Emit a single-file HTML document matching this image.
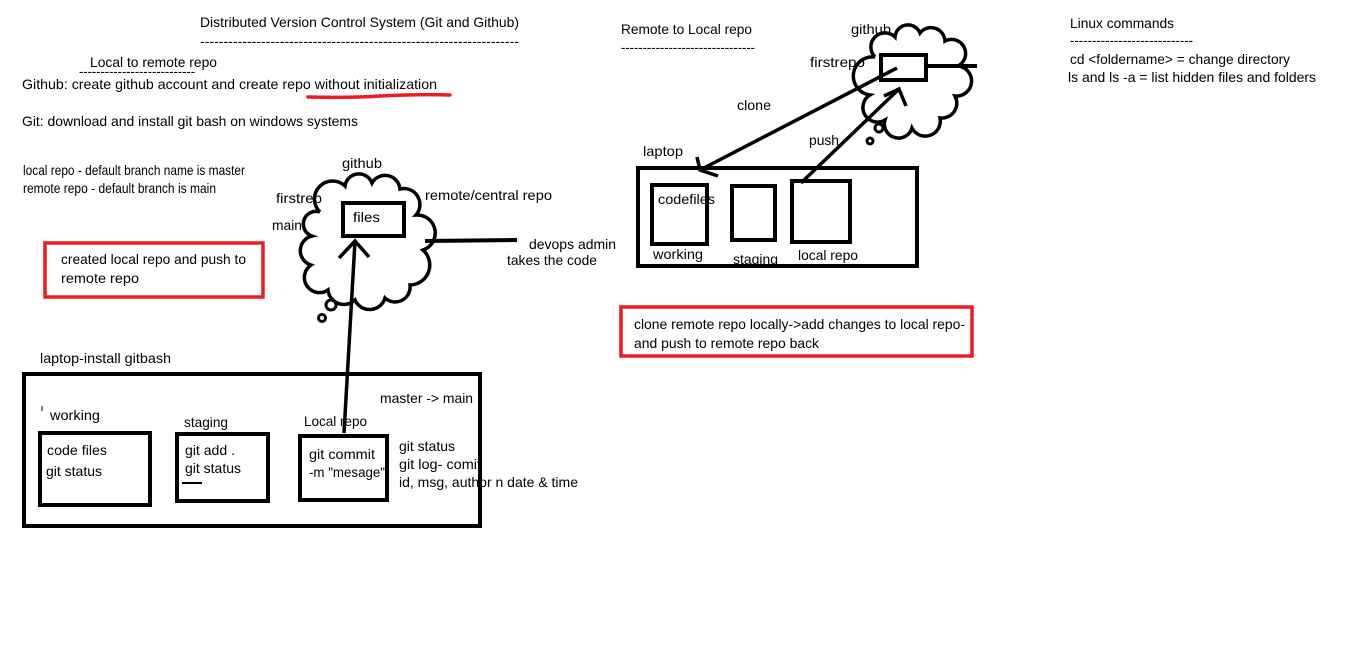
<!DOCTYPE html>
<html><head><meta charset="utf-8"><style>
html,body{margin:0;padding:0;background:#fff;width:1359px;height:665px;overflow:hidden}
svg{display:block}
text{font-family:"Liberation Sans",sans-serif;font-size:14px;fill:#000}
</style></head><body>
<svg width="1359" height="665" viewBox="0 0 1359 665" xmlns="http://www.w3.org/2000/svg">
<g fill="none" stroke="#000" stroke-width="4">
<!-- cloud 1 -->
<path d="M320 212 A18 18 0 0 1 345 186 A14 14 0 0 1 372 183 A15 15 0 0 1 400 189 A16 16 0 0 1 416 215 A18 18 0 0 1 423 250 A20 20 0 0 1 410 285 A15 15 0 0 1 385 298 A16 16 0 0 1 355 300 A16 16 0 0 1 328 290 A15 15 0 0 1 311 265 A15 15 0 0 1 312 236 A12 12 0 0 1 320 212" fill="#fff" stroke-width="3.5"/>
<rect x="343" y="203" width="61" height="33" fill="#fff"/>
<!-- cloud 2 -->
<path d="M875 57 A14 14 0 0 1 895 37 A13 13 0 0 1 920 33 A14 14 0 0 1 945 41 A14 14 0 0 1 958 66 A15 15 0 0 1 955 96 A15 15 0 0 1 940 118 A15 15 0 0 1 912 128 A14 14 0 0 1 885 120 A14 14 0 0 1 870 95 A18 18 0 0 1 875 57" fill="#fff" stroke-width="3.5"/>
<rect x="881" y="55" width="45" height="25" fill="#fff"/>
</g>
<g>
<text x="200" y="27" textLength="319" lengthAdjust="spacingAndGlyphs">Distributed Version Control System (Git and Github)</text>
<text x="200" y="46" textLength="319" lengthAdjust="spacingAndGlyphs">--------------------------------------------------------------------</text>
<text x="90" y="67" textLength="127" lengthAdjust="spacingAndGlyphs">Local to remote repo</text>
<text x="79" y="76" textLength="116" lengthAdjust="spacingAndGlyphs">---------------------------</text>
<text x="22" y="89" textLength="415" lengthAdjust="spacingAndGlyphs">Github: create github account and create repo without initialization</text>
<text x="22" y="126" textLength="336" lengthAdjust="spacingAndGlyphs">Git: download and install git bash on windows systems</text>
<text x="23" y="175" textLength="222" lengthAdjust="spacingAndGlyphs">local repo - default branch name is master</text>
<text x="23" y="193" textLength="193" lengthAdjust="spacingAndGlyphs">remote repo - default branch is main</text>
<text x="342" y="168" textLength="40" lengthAdjust="spacingAndGlyphs">github</text>
<text x="276" y="203" textLength="46" lengthAdjust="spacingAndGlyphs">firstrep</text>
<text x="272" y="230" textLength="30" lengthAdjust="spacingAndGlyphs">main</text>
<text x="353" y="222" textLength="27" lengthAdjust="spacingAndGlyphs">files</text>
<text x="425" y="200" textLength="127" lengthAdjust="spacingAndGlyphs">remote/central repo</text>
<text x="529" y="249" textLength="87" lengthAdjust="spacingAndGlyphs">devops admin</text>
<text x="507" y="265" textLength="90" lengthAdjust="spacingAndGlyphs">takes the code</text>
<text x="61" y="264" textLength="185" lengthAdjust="spacingAndGlyphs">created local repo and push to</text>
<text x="61" y="283" textLength="78" lengthAdjust="spacingAndGlyphs">remote repo</text>
<text x="40" y="363" textLength="131" lengthAdjust="spacingAndGlyphs">laptop-install gitbash</text>
<text x="380" y="403" textLength="93" lengthAdjust="spacingAndGlyphs">master -&gt; main</text>
<text x="50" y="420" textLength="50" lengthAdjust="spacingAndGlyphs">working</text>
<text x="184" y="427" textLength="44" lengthAdjust="spacingAndGlyphs">staging</text>
<text x="304" y="426" textLength="63" lengthAdjust="spacingAndGlyphs">Local repo</text>
<text x="47" y="455" textLength="60" lengthAdjust="spacingAndGlyphs">code files</text>
<text x="46" y="476" textLength="56" lengthAdjust="spacingAndGlyphs">git status</text>
<text x="185" y="455" textLength="50" lengthAdjust="spacingAndGlyphs">git add .</text>
<text x="185" y="473" textLength="56" lengthAdjust="spacingAndGlyphs">git status</text>
<text x="309" y="459" textLength="66" lengthAdjust="spacingAndGlyphs">git commit</text>
<text x="309" y="477" textLength="76" lengthAdjust="spacingAndGlyphs">-m "mesage"</text>
<text x="399" y="451" textLength="56" lengthAdjust="spacingAndGlyphs">git status</text>
<text x="399" y="469" textLength="82" lengthAdjust="spacingAndGlyphs">git log- comit</text>
<text x="399" y="487" textLength="179" lengthAdjust="spacingAndGlyphs">id, msg, author n date &amp; time</text>
<text x="621" y="34" textLength="131" lengthAdjust="spacingAndGlyphs">Remote to Local repo</text>
<text x="621" y="52" textLength="134" lengthAdjust="spacingAndGlyphs">-------------------------------</text>
<text x="851" y="34" textLength="40" lengthAdjust="spacingAndGlyphs">github</text>
<text x="810" y="67" textLength="55" lengthAdjust="spacingAndGlyphs">firstrepo</text>
<text x="737" y="110" textLength="34" lengthAdjust="spacingAndGlyphs">clone</text>
<text x="809" y="145" textLength="30" lengthAdjust="spacingAndGlyphs">push</text>
<text x="643" y="156" textLength="40" lengthAdjust="spacingAndGlyphs">laptop</text>
<text x="658" y="204" textLength="57" lengthAdjust="spacingAndGlyphs">codefiles</text>
<text x="653" y="259" textLength="50" lengthAdjust="spacingAndGlyphs">working</text>
<text x="733" y="264" textLength="45" lengthAdjust="spacingAndGlyphs">staging</text>
<text x="798" y="260" textLength="60" lengthAdjust="spacingAndGlyphs">local repo</text>
<text x="634" y="329" textLength="331" lengthAdjust="spacingAndGlyphs">clone remote repo locally-&gt;add changes to local repo-</text>
<text x="634" y="348" textLength="185" lengthAdjust="spacingAndGlyphs">and push to remote repo back</text>
<text x="1070" y="28" textLength="104" lengthAdjust="spacingAndGlyphs">Linux commands</text>
<text x="1070" y="45" textLength="123" lengthAdjust="spacingAndGlyphs">----------------------------</text>
<text x="1070" y="64" textLength="220" lengthAdjust="spacingAndGlyphs">cd &lt;foldername&gt; = change directory</text>
<text x="1068" y="82" textLength="248" lengthAdjust="spacingAndGlyphs">ls and ls -a = list hidden files and folders</text>
</g>
<g fill="none" stroke="#000" stroke-width="4">
<circle cx="331" cy="305" r="5" stroke-width="3"/>
<circle cx="322" cy="318" r="3.5" stroke-width="3"/>
<line x1="425" y1="241" x2="517" y2="240"/>
<path d="M344 433 L355 241 M339 258 L355 241 L369 257" stroke-width="3.5"/>
<rect x="24" y="374" width="456" height="152"/>
<rect x="40" y="433" width="110" height="72"/>
<rect x="177" y="434" width="91" height="67"/>
<rect x="300" y="436" width="87" height="64"/>
<line x1="182" y1="483" x2="202" y2="483" stroke-width="2"/>
<line x1="42" y1="406" x2="42" y2="411" stroke-width="1"/>
<rect x="45" y="243" width="218" height="54" stroke="#ed1c24" stroke-width="3.5"/>
<rect x="621" y="307" width="351" height="49" stroke="#ed1c24" stroke-width="3.5"/>
<path d="M308 97 Q350 98 380 96 Q420 94 450 95" stroke="#ed1c24" stroke-width="3.5" stroke-linecap="round"/>
<line x1="926" y1="66" x2="977" y2="66"/>
<circle cx="879" cy="128" r="4" stroke-width="3"/>
<circle cx="870" cy="141" r="3" stroke-width="3"/>
<rect x="638" y="168" width="279" height="98"/>
<rect x="652" y="185" width="55" height="59"/>
<rect x="732" y="186" width="43" height="54"/>
<rect x="792" y="181" width="58" height="61"/>
<path d="M897 68 L700 170 M697 157 L700 170 L718 176" stroke-width="3.5"/>
<path d="M801 183 L899 89 M884 96 L899 89 L906 106" stroke-width="3.5"/>
</g>
</svg>
</body></html>
